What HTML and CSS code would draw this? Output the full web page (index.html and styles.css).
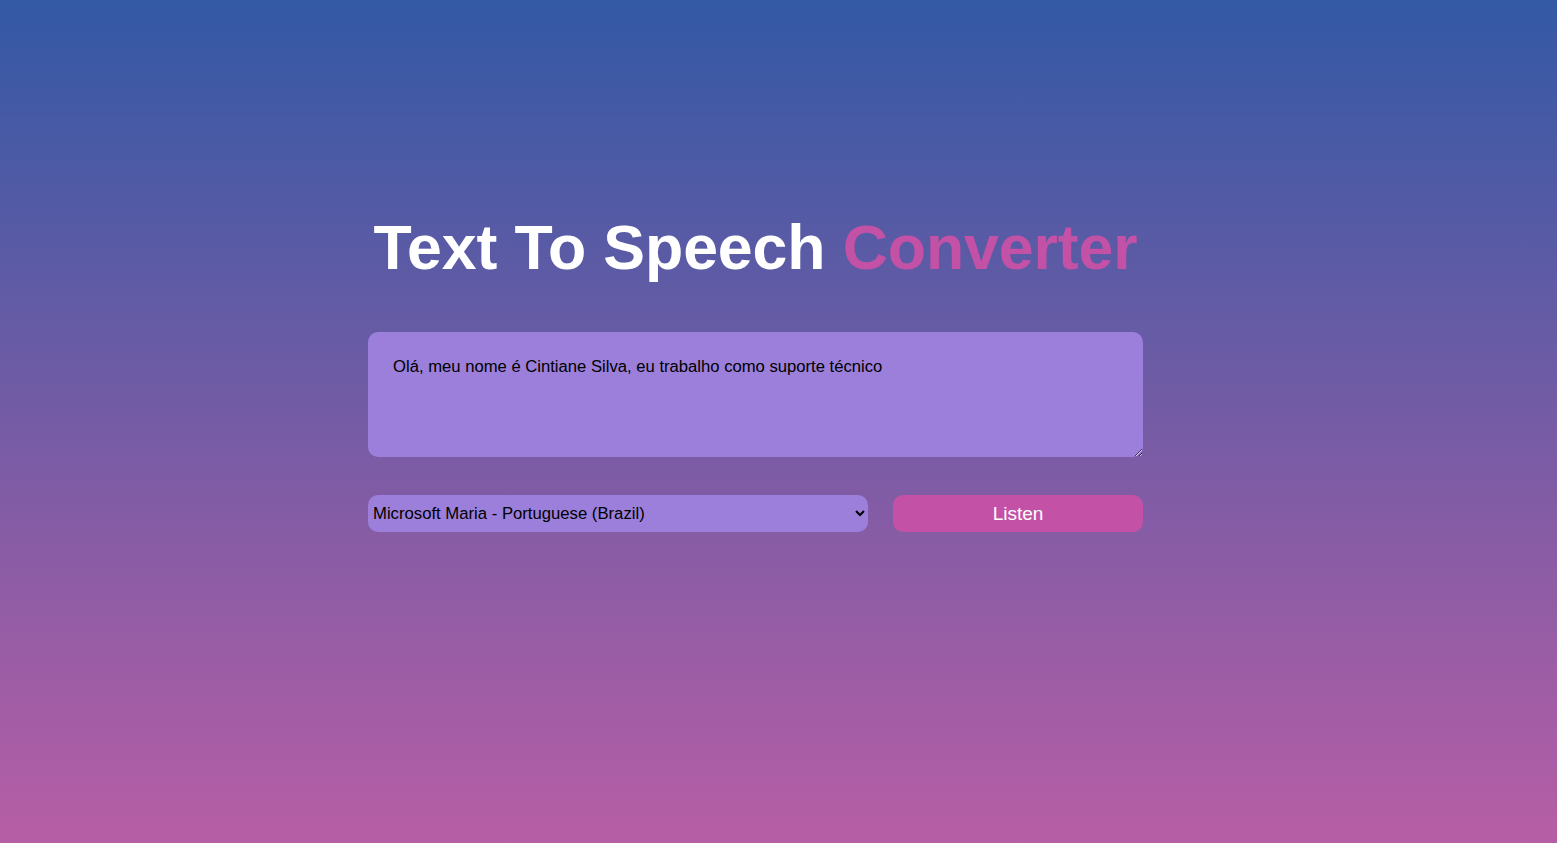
FILE: index.html
```html
<!DOCTYPE html>
<html lang="pt">
<head>
<meta charset="utf-8">
<title>Text To Speech Converter</title>
<link rel="stylesheet" href="styles.css">
</head>
<body>
<div class="page">
  <main class="hero">
    <h1 class="title">Text To Speech <span class="accent">Converter</span></h1>
    <textarea class="input" spellcheck="false">Olá, meu nome é Cintiane Silva, eu trabalho como suporte técnico</textarea>
    <div class="row">
      <select class="voice">
        <option>Microsoft Maria - Portuguese (Brazil)</option>
      </select>
      <button class="listen">Listen</button>
    </div>
  </main>
</div>
</body>
</html>
```

FILE: styles.css
```css
html, body {
  margin: 0;
  padding: 0;
}
body {
  min-height: 100vh;
  background: linear-gradient(to bottom, #3359a5 0%, #b75ea5 100%);
  font-family: "Liberation Sans", Arial, sans-serif;
}
.page {
  min-height: 843px;
  display: flex;
  justify-content: center;
  padding-right: 46px;
  padding-top: 212px;
  box-sizing: border-box;
}
.hero {
  width: 775px;
  display: flex;
  flex-direction: column;
}
.title {
  margin: 0 0 49px;
  font-size: 62.6px;
  font-weight: 700;
  color: #ffffff;
  text-align: center;
  line-height: 71px;
  letter-spacing: -0.1px;
}
.accent {
  color: #c351a5;
}
.input {
  height: 125px;
  box-sizing: border-box;
  border: none;
  outline: none;
  border-radius: 10px;
  background: #9b7fdb;
  color: #000;
  padding: 25px 25px;
  font-family: "Liberation Sans", Arial, sans-serif;
  font-size: 16.65px;
  margin: 0;
}
.row {
  display: flex;
  gap: 25px;
  margin-top: 38px;
}
.voice {
  flex: 0 0 500px;
  height: 37px;
  border: none;
  outline: none;
  border-radius: 10px;
  background-color: #9b7fdb;
  color: #000;
  font-family: "Liberation Sans", Arial, sans-serif;
  font-size: 16.7px;
  padding: 0 7px 0 1px;
}
.listen {
  flex: 1;
  height: 37px;
  border: none;
  border-radius: 10px;
  background: #c352a6;
  color: #fff;
  font-family: "Liberation Sans", Arial, sans-serif;
  font-size: 19px;
  cursor: pointer;
}
```
